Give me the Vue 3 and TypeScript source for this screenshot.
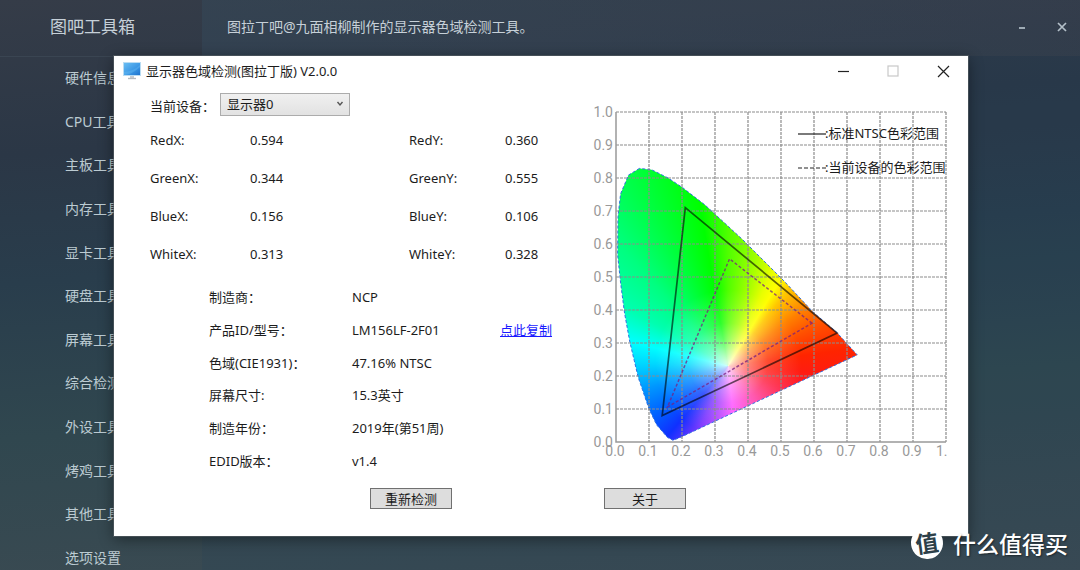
<script setup lang="ts">
import { ref } from 'vue'

type Point = [number, number]

const tools: string[] = [
  '硬件信息', 'CPU工具', '主板工具', '内存工具', '显卡工具', '硬盘工具',
  '屏幕工具', '综合检测', '外设工具', '烤鸡工具', '其他工具', '选项设置',
]

const device = ref('显示器0')

const measurements = [
  { name: 'Red', x: '0.594', y: '0.360' },
  { name: 'Green', x: '0.344', y: '0.555' },
  { name: 'Blue', x: '0.156', y: '0.106' },
  { name: 'White', x: '0.313', y: '0.328' },
]

const details = [
  { label: '制造商：', value: 'NCP' },
  { label: '产品ID/型号：', value: 'LM156LF-2F01', copy: true },
  { label: '色域(CIE1931)：', value: '47.16% NTSC' },
  { label: '屏幕尺寸:', value: '15.3英寸' },
  { label: '制造年份：', value: '2019年(第51周)' },
  { label: 'EDID版本：', value: 'v1.4' },
]

// Chart geometry inside the 360 x 360 view box
const LEFT = 26
const BOTTOM = 340
const SIZE = 330
const ticks = Array.from({ length: 11 }, (_, i) => i)

// Outline of the CIE 1931 diagram, as x/y chromaticities
const locus: Point[] = [
  [0.071, 0.829], [0.038, 0.809], [0.014, 0.752], [0.006, 0.683], [0.005, 0.567],
  [0.014, 0.482], [0.026, 0.390], [0.042, 0.303], [0.067, 0.197], [0.100, 0.100],
  [0.123, 0.052], [0.156, 0.014], [0.173, 0.005], [0.195, 0.014], [0.731, 0.264],
  [0.670, 0.331], [0.597, 0.394], [0.510, 0.487], [0.385, 0.612], [0.270, 0.718],
  [0.203, 0.770], [0.158, 0.800], [0.108, 0.825],
]
const ntsc: Point[] = [[0.21, 0.71], [0.67, 0.33], [0.14, 0.08]]
const current: Point[] = measurements.slice(0, 3).map((m) => [Number(m.x), Number(m.y)])

const toSvg = (pts: Point[]): string =>
  pts.map(([x, y]) => `${LEFT + x * SIZE},${BOTTOM - y * SIZE}`).join(' ')

const clip = `polygon(${locus.map(([x, y]) => `${x * 100}% ${(1 - y) * 100}%`).join(', ')})`
</script>

<template>
  <div class="desktop">
    <aside class="sidebar">
      <h1 class="brand">图吧工具箱</h1>
      <nav class="tools">
        <a v-for="t in tools" :key="t" href="#" class="tool">{{ t }}</a>
      </nav>
    </aside>
    <main class="main">
      <header class="topbar">
        <p class="notice">图拉丁吧@九面相柳制作的显示器色域检测工具。</p>
        <button class="top-btn" aria-label="最小化">
          <svg width="12" height="12" viewBox="0 0 12 12"><path d="M3 7H9" /></svg>
        </button>
        <button class="top-btn" aria-label="关闭">
          <svg width="12" height="12" viewBox="0 0 12 12"><path d="M2 2L10 10M10 2L2 10" /></svg>
        </button>
      </header>
    </main>

    <section class="dialog" role="dialog" aria-labelledby="dialog-title">
      <header class="titlebar">
        <svg class="monitor" width="18" height="18" viewBox="0 0 18 18">
          <defs>
            <linearGradient id="screen" x1="0" y1="0" x2="1" y2="1">
              <stop offset="0" stop-color="#6cc0f4" />
              <stop offset="0.6" stop-color="#3a96e4" />
              <stop offset="1" stop-color="#1c6fcb" />
            </linearGradient>
          </defs>
          <path d="M7 13H11V16H7Z" fill="#c9cdd1" />
          <path d="M5 16.5H13" stroke="#b5bac0" stroke-width="1.4" />
          <rect x="0.5" y="0.5" width="17" height="13" fill="url(#screen)" stroke="#b9dcf3" />
          <path d="M1 13Q10 12 17 5V3Q11 9 1 10Z" fill="#7fd0fa" opacity="0.25" />
        </svg>
        <h2 id="dialog-title" class="dialog-title">显示器色域检测(图拉丁版) V2.0.0</h2>
        <button class="win-btn" aria-label="最小化">
          <svg width="14" height="14" viewBox="0 0 14 14"><path d="M2 7.500H13" /></svg>
        </button>
        <button class="win-btn disabled" aria-label="最大化" disabled>
          <svg width="14" height="14" viewBox="0 0 14 14"><rect x="2" y="2" width="10" height="10" /></svg>
        </button>
        <button class="win-btn" aria-label="关闭">
          <svg width="14" height="14" viewBox="0 0 14 14"><path d="M2 2L13 13M13 2L2 13" /></svg>
        </button>
      </header>

      <div class="content">
        <div class="info">
          <div class="device">
            <label for="device">当前设备：</label>
            <div class="select">
              <select id="device" v-model="device">
                <option>显示器0</option>
              </select>
              <svg width="8" height="6" viewBox="0 0 8 6"><path d="M1.500 1L4 4L6.500 1" /></svg>
            </div>
          </div>

          <dl class="measurements">
            <template v-for="m in measurements" :key="m.name">
              <dt>{{ m.name }}X:</dt>
              <dd>{{ m.x }}</dd>
              <dt>{{ m.name }}Y:</dt>
              <dd>{{ m.y }}</dd>
            </template>
          </dl>

          <dl class="details">
            <template v-for="d in details" :key="d.label">
              <dt>{{ d.label }}</dt>
              <dd>
                <span>{{ d.value }}</span>
                <a v-if="d.copy" href="#" class="copy">点此复制</a>
              </dd>
            </template>
          </dl>
        </div>

        <svg class="chart" viewBox="0 0 360 360" role="img" aria-label="CIE1931">
          <foreignObject :x="LEFT" :y="BOTTOM - SIZE" :width="SIZE" :height="SIZE">
            <div class="spectrum" :style="{ clipPath: clip }"></div>
          </foreignObject>
          <polygon class="locus" :points="toSvg(locus)" />
          <g class="grid">
            <template v-for="i in ticks" :key="i">
              <line v-if="i > 0" :x1="LEFT + i * 33" y1="10" :x2="LEFT + i * 33" y2="340" />
              <line v-if="i > 0" x1="26" :y1="BOTTOM - i * 33" x2="356" :y2="BOTTOM - i * 33" />
            </template>
          </g>
          <polygon class="ntsc" :points="toSvg(ntsc)" />
          <polygon class="current" :points="toSvg(current)" />
          <path class="axes" d="M26 10V340H356" />
          <g class="ticks">
            <text v-for="i in ticks" :key="'y' + i" x="23" :y="BOTTOM + 5 - i * 33" text-anchor="end">{{ (i / 10).toFixed(1) }}</text>
            <text v-for="i in ticks.slice(0, 10)" :key="'x' + i" :x="LEFT - 1 + i * 33" y="354" text-anchor="middle">{{ (i / 10).toFixed(1) }}</text>
            <text x="346" y="354">1.</text>
          </g>
          <g class="legend">
            <path d="M208 32H236" />
            <text x="235" y="36">:标准NTSC色彩范围</text>
            <path d="M208 66H236" stroke-dasharray="4 2" />
            <text x="235" y="70">:当前设备的色彩范围</text>
          </g>
        </svg>
      </div>

      <footer class="actions">
        <button class="action">重新检测</button>
        <button class="action">关于</button>
      </footer>
    </section>

    <div class="watermark">
      <span class="badge">值</span>
      <span>什么值得买</span>
    </div>
  </div>
</template>

<style>
html,
body {
  margin: 0;
  height: 100%;
}
</style>

<style scoped>
.desktop {
  position: relative;
  display: flex;
  height: 100vh;
  min-height: 570px;
  overflow: hidden;
  background: linear-gradient(176deg, #353c48 0%, #2b3746 24%, #293d4c 44%, #30474f 68%, #3d4b53 100%);
  color: #c6d0d8;
  font-family: "Noto Sans", "Noto Sans CJK SC", sans-serif;
  font-size: 13px;
  line-height: 20px;
}

h1,
h2,
p,
dl,
dd {
  margin: 0;
  font-weight: 400;
}

button {
  padding: 0;
  font: inherit;
}

.sidebar {
  display: flex;
  flex-direction: column;
  width: 202px;
  box-sizing: border-box;
}

.brand {
  height: 56px;
  padding-left: 50px;
  border-bottom: 1px solid #3a4552;
  font-size: 17px;
  line-height: 54px;
}

.tools {
  display: flex;
  flex: 1;
  flex-direction: column;
  justify-content: space-between;
  padding: 11px 0 2px 65px;
  font-size: 14px;
}

.tool {
  color: #bccbd2;
  text-decoration: none;
}

.main {
  flex: 1;
  background: rgba(30, 66, 92, 0.14);
}

.topbar {
  display: flex;
  align-items: center;
  height: 56px;
  box-sizing: border-box;
  padding: 0 4px 2px 25px;
  background: linear-gradient(90deg, rgba(66, 88, 102, 0.25), rgba(72, 72, 80, 0.25));
}

.notice {
  flex: 1;
  font-size: 14px;
}

.top-btn {
  display: grid;
  place-items: center;
  width: 28px;
  height: 28px;
  margin-left: 12px;
  border: 0;
  background: none;
}

.top-btn path {
  fill: none;
  stroke: #b4c0c9;
  stroke-width: 1.7;
}

.dialog {
  position: absolute;
  inset: 56px 112px 34px 114px;
  display: flex;
  flex-direction: column;
  background: #fff;
  color: #1c1c1c;
  box-shadow: 0 0 0 1px rgba(90, 98, 104, 0.6), 0 3px 14px rgba(0, 0, 0, 0.45);
}

.titlebar {
  display: flex;
  align-items: center;
  height: 30px;
}

.monitor {
  margin: 0 5px 0 9px;
}

.dialog-title {
  flex: 1;
  font-size: 13px;
}

.win-btn {
  display: grid;
  place-items: center;
  width: 50px;
  height: 30px;
  border: 0;
  background: none;
}

.win-btn svg {
  fill: none;
  stroke: #222;
  stroke-width: 1.2;
}

.win-btn.disabled svg {
  stroke: #c8c8c8;
}

.content {
  display: flex;
  align-items: flex-start;
  flex: 1;
}

.info {
  flex: 1;
}

.device {
  display: flex;
  align-items: center;
  height: 36px;
  padding-left: 36px;
}

.device label {
  width: 70px;
  padding-top: 4px;
}

.select {
  position: relative;
  width: 130px;
}

.select select {
  display: block;
  width: 100%;
  height: 23px;
  padding: 0 6px 2px;
  appearance: none;
  border: 1px solid #acacac;
  border-radius: 0;
  background: linear-gradient(#f0f0f0, #e2e2e2);
  color: inherit;
  font: inherit;
}

.select svg {
  position: absolute;
  top: 8px;
  right: 6px;
  fill: none;
  stroke: #555;
  stroke-width: 1.4;
  pointer-events: none;
}

.measurements {
  display: grid;
  grid-template-columns: 100px 159px 96px 1fr;
  grid-auto-rows: 38px;
  align-items: center;
  margin-top: -1px;
  padding-left: 36px;
}

.details {
  display: grid;
  grid-template-columns: 143px 1fr;
  grid-auto-rows: 1fr;
  align-items: center;
  height: 196px;
  padding: 8px 0 0 95px;
}

.details dd {
  display: grid;
  grid-template-columns: 148px 1fr;
}

.copy {
  color: #1a1aff;
}

.chart {
  width: 360px;
  margin: 16px 18px 0 0;
  flex: none;
  overflow: visible;
}

.spectrum {
  width: 100%;
  height: 100%;
  background:
    radial-gradient(circle at 34% 76%, rgba(255, 255, 255, 0.85) 0, rgba(255, 255, 255, 0.45) 6%, rgba(255, 255, 255, 0.18) 12%, transparent 22%),
    conic-gradient(from 0deg at 34% 77%,
      #50ff00 0deg, #a0ff00 14deg, #e8ff00 25deg, #ffff00 31deg, #ffc800 38deg, #ff8000 53deg,
      #ff5000 66deg, #ff2400 82deg, #ff1c10 94deg, #ff2040 112deg, #ff38a0 140deg, #ff50ff 174deg,
      #7a38ff 205deg, #1030ff 221deg, #0060ff 236deg, #0098ff 255deg, #00d8ff 272deg,
      #00ffff 284deg, #00ffb0 300deg, #00ff80 318deg, #00ff48 332deg, #00ff00 350deg, #50ff00 360deg);
}

.locus {
  fill: none;
  stroke: #3070e0;
  stroke-width: 1;
  stroke-dasharray: 3 2;
}

.ntsc {
  fill: none;
  stroke: #000;
  stroke-opacity: 0.6;
  stroke-width: 1.7;
}

.current {
  fill: none;
  stroke: #7a2080;
  stroke-opacity: 0.75;
  stroke-width: 1.5;
  stroke-dasharray: 3 2;
}

.grid line {
  stroke: #8c8c8c;
  stroke-width: 1.2;
  stroke-dasharray: 3 1;
}

.axes {
  fill: none;
  stroke: #999;
  stroke-width: 1.5;
}

.ticks text {
  fill: #999;
  font-family: Roboto, sans-serif;
  font-size: 14px;
}

.legend path {
  stroke: #222;
  stroke-width: 1.2;
}

.legend text {
  fill: #1c1c1c;
  font-size: 13px;
}

.actions {
  display: flex;
  gap: 152px;
  padding: 0 0 27px 256px;
}

.action {
  width: 82px;
  height: 21px;
  border: 1px solid #707070;
  background: #ddd;
  color: inherit;
  line-height: 18px;
}

.watermark {
  position: absolute;
  right: 12px;
  bottom: 11px;
  display: flex;
  align-items: center;
  gap: 10px;
  color: #fff;
  font-family: "Noto Sans CJK SC", sans-serif;
  font-size: 23px;
  font-weight: 500;
  line-height: 32px;
  text-shadow: 1px 1px 2px rgba(0, 0, 0, 0.5);
}

.badge {
  width: 32px;
  height: 32px;
  border-radius: 50%;
  background: #fff;
  color: #2d4049;
  font-weight: 700;
  line-height: 30px;
  text-align: center;
  text-shadow: none;
  transform: rotate(-8deg);
}
</style>
